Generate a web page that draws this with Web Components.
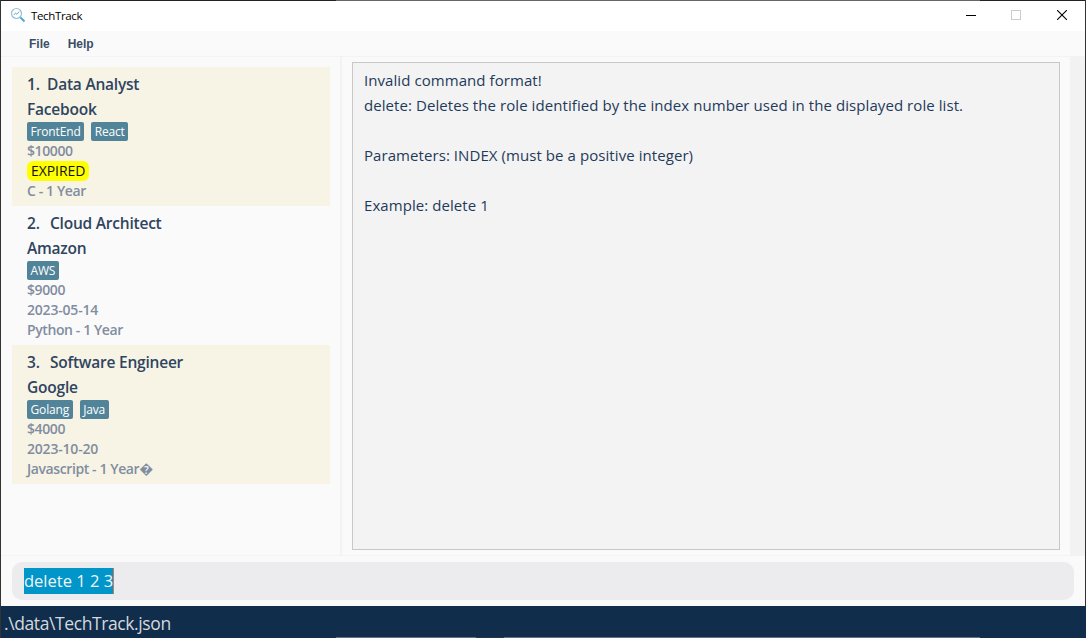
<!DOCTYPE html>
<html>
<head>
<meta charset="utf-8">
<title>TechTrack</title>
<style>
  html, body { margin: 0; height: 100%; }
  body { font-family: "Open Sans", "Noto Sans", sans-serif; overflow: hidden; }
</style>
</head>
<body>
<tt-window>
  <tt-titlebar slot="title">TechTrack</tt-titlebar>
  <tt-menubar slot="menu"></tt-menubar>
  <tt-role-list slot="list">
    <tt-role-card style="--num-width:20px" index="1" name="Data Analyst" company="Facebook" tags="FrontEnd,React" salary="$10000" expired skill="C - 1 Year"></tt-role-card>
    <tt-role-card index="2" name="Cloud Architect" company="Amazon" tags="AWS" salary="$9000" deadline="2023-05-14" skill="Python - 1 Year"></tt-role-card>
    <tt-role-card index="3" name="Software Engineer" company="Google" tags="Golang,Java" salary="$4000" deadline="2023-10-20" skill="Javascript - 1 Year�"></tt-role-card>
  </tt-role-list>
  <tt-result slot="result">Invalid command format!
delete: Deletes the role identified by the index number used in the displayed role list.

Parameters: INDEX (must be a positive integer)

Example: delete 1</tt-result>
  <tt-command slot="command" value="delete 1 2 3"></tt-command>
  <tt-status slot="status">.\data\TechTrack.json</tt-status>
</tt-window>

<script>
const windowTemplate = document.createElement('template');
windowTemplate.innerHTML = `
  <style>
    :host {
      display: flex;
      flex-direction: column;
      box-sizing: border-box;
      width: 1086px;
      height: 638px;
      padding-top: 1px;
      border-left: 1px solid #333;
      border-right: 1px solid #333;
      background:
        linear-gradient(to right, #222 335px, #666 335px, #666 979px, #222 979px) top / 100% 1px no-repeat,
        #fafafa;
    }
    .main {
      flex: none;
      box-sizing: border-box;
      height: 500px;
      display: flex;
      border-top: 1px solid #f3f3f3;
      border-bottom: 1px solid #f3f3f3;
    }
    .left {
      flex: none;
      width: 339px;
      border-right: 2px solid #f3f3f3;
    }
    .right {
      flex: 1;
      display: flex;
      min-width: 0;
    }
  </style>
  <slot name="title"></slot>
  <slot name="menu"></slot>
  <div class="main">
    <div class="left"><slot name="list"></slot></div>
    <div class="right"><slot name="result"></slot></div>
  </div>
  <slot name="command"></slot>
  <slot name="status"></slot>`;

class TtWindow extends HTMLElement {
  constructor() {
    super();
    this.attachShadow({ mode: 'open' }).appendChild(windowTemplate.content.cloneNode(true));
  }
}

const titlebarTemplate = document.createElement('template');
titlebarTemplate.innerHTML = `
  <style>
    :host {
      display: flex;
      align-items: center;
      flex: none;
      height: 30px;
      background: #fff;
      color: #000;
      font: 11.5px "Open Sans", sans-serif;
      letter-spacing: -0.35px;
    }
    .icon { margin: 0 5px 2px 9px; display: block; }
    .label { flex: 1; padding-bottom: 1px; }
    .btn {
      width: 46px;
      height: 30px;
      box-sizing: border-box;
      padding-bottom: 2px;
      display: flex;
      align-items: center;
      justify-content: center;
    }
    .btn.min { width: 44px; }
    .btn svg { display: block; }
  </style>
  <svg class="icon" width="16" height="16" viewBox="0 0 16 16" fill="none">
    <circle cx="6.5" cy="6.5" r="5" stroke="#8fc4dc" stroke-width="1.2"/>
    <path d="M3.8 8l1.8-2 1.4 1.3L9.2 4.6" stroke="#8aa6b4" stroke-width="1"/>
    <path d="M10.4 10.4L14.5 14.5" stroke="#4aa8d4" stroke-width="2"/>
  </svg>
  <span class="label"><slot></slot></span>
  <div class="btn min"><svg width="10" height="10" viewBox="0 0 10 10"><path d="M0 5.5H10" stroke="#000"/></svg></div>
  <div class="btn"><svg width="10" height="10" viewBox="0 0 10 10"><rect x=".5" y=".5" width="9" height="9" fill="none" stroke="#ccc"/></svg></div>
  <div class="btn"><svg width="10" height="10" viewBox="0 0 10 10"><path d="M0 0L10 10M10 0L0 10" stroke="#000" stroke-width="1.1"/></svg></div>`;

class TtTitlebar extends HTMLElement {
  constructor() {
    super();
    this.attachShadow({ mode: 'open' }).appendChild(titlebarTemplate.content.cloneNode(true));
  }
}

const menubarTemplate = document.createElement('template');
menubarTemplate.innerHTML = `
  <style>
    :host {
      display: flex;
      align-items: center;
      flex: none;
      height: 25px;
      padding-left: 28px;
      gap: 18px;
      background: #fafafa;
      color: #3a4d66;
      font: bold 12px "Liberation Sans", sans-serif;
    }
  </style>
  <span>File</span>
  <span>Help</span>`;

class TtMenubar extends HTMLElement {
  constructor() {
    super();
    this.attachShadow({ mode: 'open' }).appendChild(menubarTemplate.content.cloneNode(true));
  }
}

const listTemplate = document.createElement('template');
listTemplate.innerHTML = `
  <style>
    :host {
      display: block;
      padding: 10px 10px 0 11px;
    }
    ::slotted(tt-role-card:nth-of-type(odd)) { background: #f7f4e5; }
  </style>
  <slot></slot>`;

class TtRoleList extends HTMLElement {
  constructor() {
    super();
    this.attachShadow({ mode: 'open' }).appendChild(listTemplate.content.cloneNode(true));
  }
}

const cardTemplate = document.createElement('template');
cardTemplate.innerHTML = `
  <style>
    :host {
      display: block;
      box-sizing: border-box;
      height: 139px;
      padding: 5px 15px 0;
      background: #fafafa;
      font-family: "Open Sans", sans-serif;
    }
    .head, .company {
      height: 25px;
      line-height: 25px;
      font-size: 15.5px;
      font-weight: 600;
      color: #2f4460;
      letter-spacing: -0.22px;
      white-space: nowrap;
    }
    .head { display: flex; }
    .head .num { flex: none; width: var(--num-width, 23px); }
    .tags { display: flex; gap: 7px; height: 19px; }
    .tag {
      height: 19px;
      line-height: 19px;
      padding: 0 3.5px;
      border-radius: 2px;
      background: #528499;
      color: #fff;
      font-size: 12px;
      letter-spacing: -0.15px;
    }
    .row {
      height: 20px;
      line-height: 20px;
      font-size: 14px;
      font-weight: 600;
      color: #818da0;
      letter-spacing: -0.4px;
    }
    .deadline { letter-spacing: -0.2px; }
    .expired {
      display: inline-block;
      height: 20px;
      line-height: 20px;
      padding: 0 4px;
      border-radius: 6px;
      background: #ffff00;
      color: #111;
      font-size: 14px;
      font-weight: 400;
      letter-spacing: -0.07px;
    }
  </style>
  <div class="head"><span class="num"></span><span class="name"></span></div>
  <div class="company"></div>
  <div class="tags"></div>
  <div class="row salary"></div>
  <div class="row deadline"></div>
  <div class="row skill"></div>`;

class TtRoleCard extends HTMLElement {
  constructor() {
    super();
    this.shadow = this.attachShadow({ mode: 'open' });
    this.shadow.appendChild(cardTemplate.content.cloneNode(true));
  }

  connectedCallback() {
    this.render();
  }

  render() {
    const $ = (s) => this.shadow.querySelector(s);
    $('.num').textContent = this.getAttribute('index') + '.';
    $('.name').textContent = this.getAttribute('name');
    $('.company').textContent = this.getAttribute('company');
    $('.salary').textContent = this.getAttribute('salary');
    $('.skill').textContent = this.getAttribute('skill');

    this.getAttribute('tags').split(',').forEach((t) => {
      const tag = document.createElement('span');
      tag.className = 'tag';
      tag.textContent = t;
      $('.tags').appendChild(tag);
    });

    if (this.hasAttribute('expired')) {
      const badge = document.createElement('span');
      badge.className = 'expired';
      badge.textContent = 'EXPIRED';
      $('.deadline').appendChild(badge);
    } else {
      $('.deadline').textContent = this.getAttribute('deadline');
    }
  }
}

const resultTemplate = document.createElement('template');
resultTemplate.innerHTML = `
  <style>
    :host {
      display: flex;
      flex: 1;
      min-width: 0;
      box-sizing: border-box;
      padding: 5px 0 5px 10px;
      background: linear-gradient(to right, #fafafa 728px, #f2f2f2 728px);
    }
    .box {
      box-sizing: border-box;
      width: 708px;
      border: 1px solid #c8c8c8;
      background: #f3f3f3;
      padding: 5px 11px;
      color: #1f3a5a;
      font-size: 15px;
      line-height: 25px;
      letter-spacing: 0.07px;
      white-space: pre-wrap;
    }
  </style>
  <div class="box"><slot></slot></div>`;

class TtResult extends HTMLElement {
  constructor() {
    super();
    this.attachShadow({ mode: 'open' }).appendChild(resultTemplate.content.cloneNode(true));
  }
}

const commandTemplate = document.createElement('template');
commandTemplate.innerHTML = `
  <style>
    :host {
      display: block;
      flex: none;
      height: 50px;
      box-sizing: border-box;
      padding: 6px 11px;
      background: #fafafa;
    }
    .field {
      display: flex;
      align-items: center;
      height: 38px;
      padding-left: 12px;
      border-radius: 10px;
      background: #ececee;
      font-size: 16.5px;
    }
    .sel {
      display: block;
      height: 26px;
      line-height: 26px;
      background: #0096c9;
      color: #f4f4f4;
      border-right: 1px solid #c87a5a;
      white-space: nowrap;
    }
  </style>
  <div class="field"><span class="sel"></span></div>`;

class TtCommand extends HTMLElement {
  constructor() {
    super();
    this.shadow = this.attachShadow({ mode: 'open' });
    this.shadow.appendChild(commandTemplate.content.cloneNode(true));
  }

  connectedCallback() {
    this.shadow.querySelector('.sel').textContent = this.getAttribute('value');
  }
}

const statusTemplate = document.createElement('template');
statusTemplate.innerHTML = `
  <style>
    :host {
      display: block;
      flex: none;
      height: 32px;
      line-height: 34px;
      margin-right: -1px;
      padding-left: 3px;
      background:
        linear-gradient(to right, transparent 335px, #5f7485 335px, #5f7485 475px, #22384f 475px, #22384f 503px, #5f7485 503px, #5f7485 979px, transparent 979px) bottom / 100% 1px no-repeat,
        #102d4c;
      color: #d5d9de;
      font-size: 17.5px;
      letter-spacing: -0.4px;
      white-space: nowrap;
      overflow: hidden;
    }
  </style>
  <slot></slot>`;

class TtStatus extends HTMLElement {
  constructor() {
    super();
    this.attachShadow({ mode: 'open' }).appendChild(statusTemplate.content.cloneNode(true));
  }
}

window.customElements.define('tt-window', TtWindow);
window.customElements.define('tt-titlebar', TtTitlebar);
window.customElements.define('tt-menubar', TtMenubar);
window.customElements.define('tt-role-list', TtRoleList);
window.customElements.define('tt-role-card', TtRoleCard);
window.customElements.define('tt-result', TtResult);
window.customElements.define('tt-command', TtCommand);
window.customElements.define('tt-status', TtStatus);
</script>
</body>
</html>
